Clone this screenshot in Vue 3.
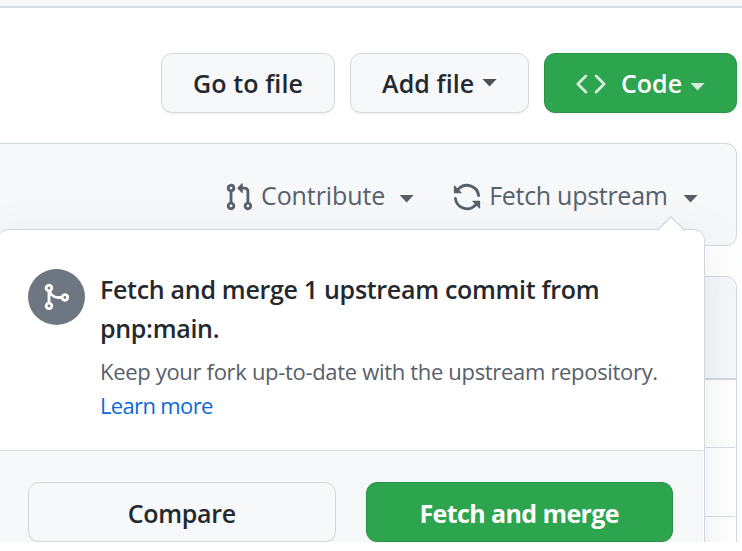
<script setup>
const icons = {
  code: 'M4.72 3.22a.75.75 0 011.06 1.06L2.06 8l3.72 3.72a.75.75 0 11-1.06 1.06L.47 8.53a.75.75 0 010-1.06l4.25-4.25zm6.56 0a.75.75 0 10-1.06 1.06L13.94 8l-3.72 3.72a.75.75 0 101.06 1.06l4.25-4.25a.75.75 0 000-1.06l-4.25-4.25z',
  pull: 'M7.177 3.073L9.573.677A.25.25 0 0110 .854v4.792a.25.25 0 01-.427.177L7.177 3.427a.25.25 0 010-.354zM3.75 2.5a.75.75 0 100 1.5.75.75 0 000-1.5zm-2.25.75a2.25 2.25 0 113 2.122v5.256a2.251 2.251 0 11-1.5 0V5.372A2.25 2.25 0 011.5 3.25zM11 2.5h-1V4h1a1 1 0 011 1v5.628a2.251 2.251 0 101.5 0V5A2.5 2.5 0 0011 2.5zm1 10.25a.75.75 0 111.5 0 .75.75 0 01-1.5 0zM3.75 12a.75.75 0 100 1.5.75.75 0 000-1.5z',
  sync: 'M8 2.5a5.487 5.487 0 00-4.131 1.869l1.204 1.204A.25.25 0 014.896 6H1.25A.25.25 0 011 5.75V2.104a.25.25 0 01.427-.177l1.38 1.38A7.001 7.001 0 0114.95 7.16a.75.75 0 11-1.49.178A5.501 5.501 0 008 2.5zM1.705 8.005a.75.75 0 01.834.656 5.501 5.501 0 009.592 2.97l-1.204-1.204a.25.25 0 01.177-.427h3.646a.25.25 0 01.25.25v3.646a.25.25 0 01-.427.177l-1.38-1.38A7.001 7.001 0 011.05 8.84a.75.75 0 01.656-.834z',
  merge: 'M5 3.254V3.25v.005a.75.75 0 110-.005v.004zm.45 1.9a2.25 2.25 0 10-1.95.218v5.256a2.25 2.25 0 101.5 0V7.123A5.735 5.735 0 009.25 9h1.378a2.251 2.251 0 100-1.5H9.25a4.25 4.25 0 01-3.8-2.346zM12.75 9a.75.75 0 100-1.5.75.75 0 000 1.5zm-8.5 4.5a.75.75 0 100-1.5.75.75 0 000 1.5z',
}
</script>

<template>
  <main class="page">
    <header class="topbar"></header>

    <div class="actions">
      <button class="btn go"><span class="t-go">Go to file</span></button>
      <button class="btn add"><span>Add file</span><i class="caret"></i></button>
      <button class="btn primary code">
        <svg class="icon" viewBox="0 0 16 16"><path :d="icons.code" /></svg>
        <span>Code</span><i class="caret"></i>
      </button>
    </div>

    <section class="branch">
      <div class="item contribute">
        <svg class="icon" viewBox="0 0 16 16"><path :d="icons.pull" /></svg>
        <span>Contribute</span><i class="caret"></i>
      </div>
      <div class="item fetch">
        <svg class="icon" viewBox="0 0 16 16"><path :d="icons.sync" /></svg>
        <span>Fetch upstream</span><i class="caret"></i>
      </div>
    </section>

    <section class="files">
      <div class="files-head"></div>
      <div class="row"></div>
      <div class="row"></div>
      <div class="row"></div>
    </section>

    <aside class="popover">
      <svg class="pointer" viewBox="0 0 30 15">
        <path class="pointer-fill" d="M1 15L15 1l14 14z" />
        <path class="pointer-line" d="M1 14.5L15 .8l14 13.7" />
      </svg>
      <div class="message">
        <div class="badge">
          <svg class="icon" viewBox="0 0 16 16"><path fill-rule="evenodd" :d="icons.merge" /></svg>
        </div>
        <div class="copy">
          <h5>Fetch and merge 1 upstream commit from<br />pnp:main.</h5>
          <p>Keep your fork up-to-date with the upstream repository.<br /><a>Learn more</a></p>
        </div>
      </div>
      <div class="footer">
        <button class="btn"><span class="t-compare">Compare</span></button>
        <button class="btn primary"><span class="t-merge">Fetch and merge</span></button>
      </div>
    </aside>
  </main>
</template>

<style>
body {
  margin: 0;
  background: #fff;
}
</style>

<style scoped>
* {
  box-sizing: border-box;
}
.page {
  position: relative;
  width: 742px;
  height: 542px;
  overflow: hidden;
  background: #fff;
  color: #24292f;
  font-family: "Open Sans", "Noto Sans", sans-serif;
  font-size: 25px;
}
.topbar {
  height: 8px;
  background: #f6f8fa;
  border-bottom: 2px solid #d8dee4;
}
.actions {
  display: flex;
  gap: 15px;
  padding: 45px 0 0 161px;
}
.btn {
  display: flex;
  align-items: center;
  height: 60px;
  margin: 0;
  padding: 0;
  border: 1px solid #d5d8da;
  border-radius: 11px;
  background: #f6f8fa;
  box-shadow: 0 2px 0 rgba(27, 31, 36, 0.04);
  color: #24292f;
  font: 600 25px/38px "Open Sans", "Noto Sans", sans-serif;
  white-space: nowrap;
}
.primary {
  background: #2da44e;
  border-color: #2a9147;
  color: #fff;
}
.go {
  width: 174px;
  justify-content: center;
}
.t-go {
  letter-spacing: 0.1px;
}
.add {
  width: 179px;
  padding-left: 31px;
}
.add span {
  letter-spacing: 0.1px;
}
.add .caret {
  margin: -1px 31px 0 auto;
  color: #4b5157;
}
.code {
  width: 193px;
  padding-left: 31px;
}
.code .icon {
  margin-top: 2px;
  margin-right: 15px;
  opacity: 0.8;
}
.code .caret {
  margin: 7px 31px 0 auto;
  color: #d5edda;
}
.icon {
  display: block;
  flex: none;
  width: 30px;
  height: 30px;
  fill: currentColor;
}
.caret {
  flex: none;
  width: 15px;
  height: 8px;
  background: currentColor;
  clip-path: polygon(0 0, 100% 0, 50% 100%);
}
.branch {
  display: flex;
  width: 738px;
  height: 103px;
  margin: 30px 0 0 -1px;
  padding: 38px 38px 0 224px;
  border: 1px solid #d0d7de;
  border-radius: 0 11px 11px 0;
  background: #f6f8fa;
  color: #57606a;
}
.item {
  display: flex;
  align-items: center;
  height: 30px;
  white-space: nowrap;
}
.item span {
  margin: -4px 0 0 7px;
  letter-spacing: -0.1px;
}
.item .caret {
  margin: 3px 0 0 auto;
}
.contribute {
  width: 191px;
}
.fetch {
  width: 247px;
  margin-left: 38px;
}
.fetch span {
  letter-spacing: -0.28px;
}
.files {
  width: 738px;
  height: 300px;
  margin: 30px 0 0 -1px;
  border: 1px solid #d0d7de;
  border-radius: 11px;
  overflow: hidden;
}
.files-head {
  height: 103px;
  background: #f6f8fa;
  border-bottom: 2px solid #d0d7de;
}
.row {
  height: 69px;
  margin-right: 1px;
  border-bottom: 1px solid #d8dee4;
}
.row:nth-child(2) {
  height: 68px;
}
.popover {
  position: absolute;
  top: 229px;
  left: -3px;
  width: 708px;
  height: 401px;
  border: 1px solid #d0d7de;
  border-radius: 11px;
  background: #fff;
  box-shadow: 0 15px 45px rgba(140, 149, 159, 0.2);
}
.pointer {
  position: absolute;
  top: -14px;
  left: 658px;
  width: 30px;
  height: 15px;
}
.pointer-fill {
  fill: #fff;
}
.pointer-line {
  fill: none;
  stroke: #d0d7de;
  stroke-width: 1.3;
}
.message {
  display: flex;
  gap: 15px;
  height: 220px;
  padding: 38px 0 0 30px;
}
.badge {
  display: flex;
  align-items: center;
  justify-content: center;
  flex: none;
  width: 57px;
  height: 56px;
  margin-top: 1px;
  border-radius: 50%;
  background: #6e7781;
  color: #fff;
}
.badge .icon {
  margin-left: -2px;
}
h5 {
  margin: 2px 0 0;
  font-size: 25px;
  font-weight: 600;
  line-height: 39px;
  letter-spacing: -0.3px;
  white-space: nowrap;
}
p {
  margin: 6px 0 0;
  color: #57606a;
  font-size: 22px;
  line-height: 34px;
  letter-spacing: -0.32px;
  white-space: nowrap;
}
a {
  color: #0969da;
  letter-spacing: -0.65px;
}
.footer {
  display: flex;
  gap: 30px;
  height: 120px;
  margin-right: 1px;
  padding: 31px 30px 0;
  border-top: 1px solid #d8dee4;
  background: #f6f8fa;
}
.footer .btn {
  flex: 1;
  justify-content: center;
}
.footer span {
  margin-top: 2px;
}
.t-compare {
  letter-spacing: -0.3px;
}
.t-merge {
  font-weight: 700;
  letter-spacing: -0.6px;
}
</style>
